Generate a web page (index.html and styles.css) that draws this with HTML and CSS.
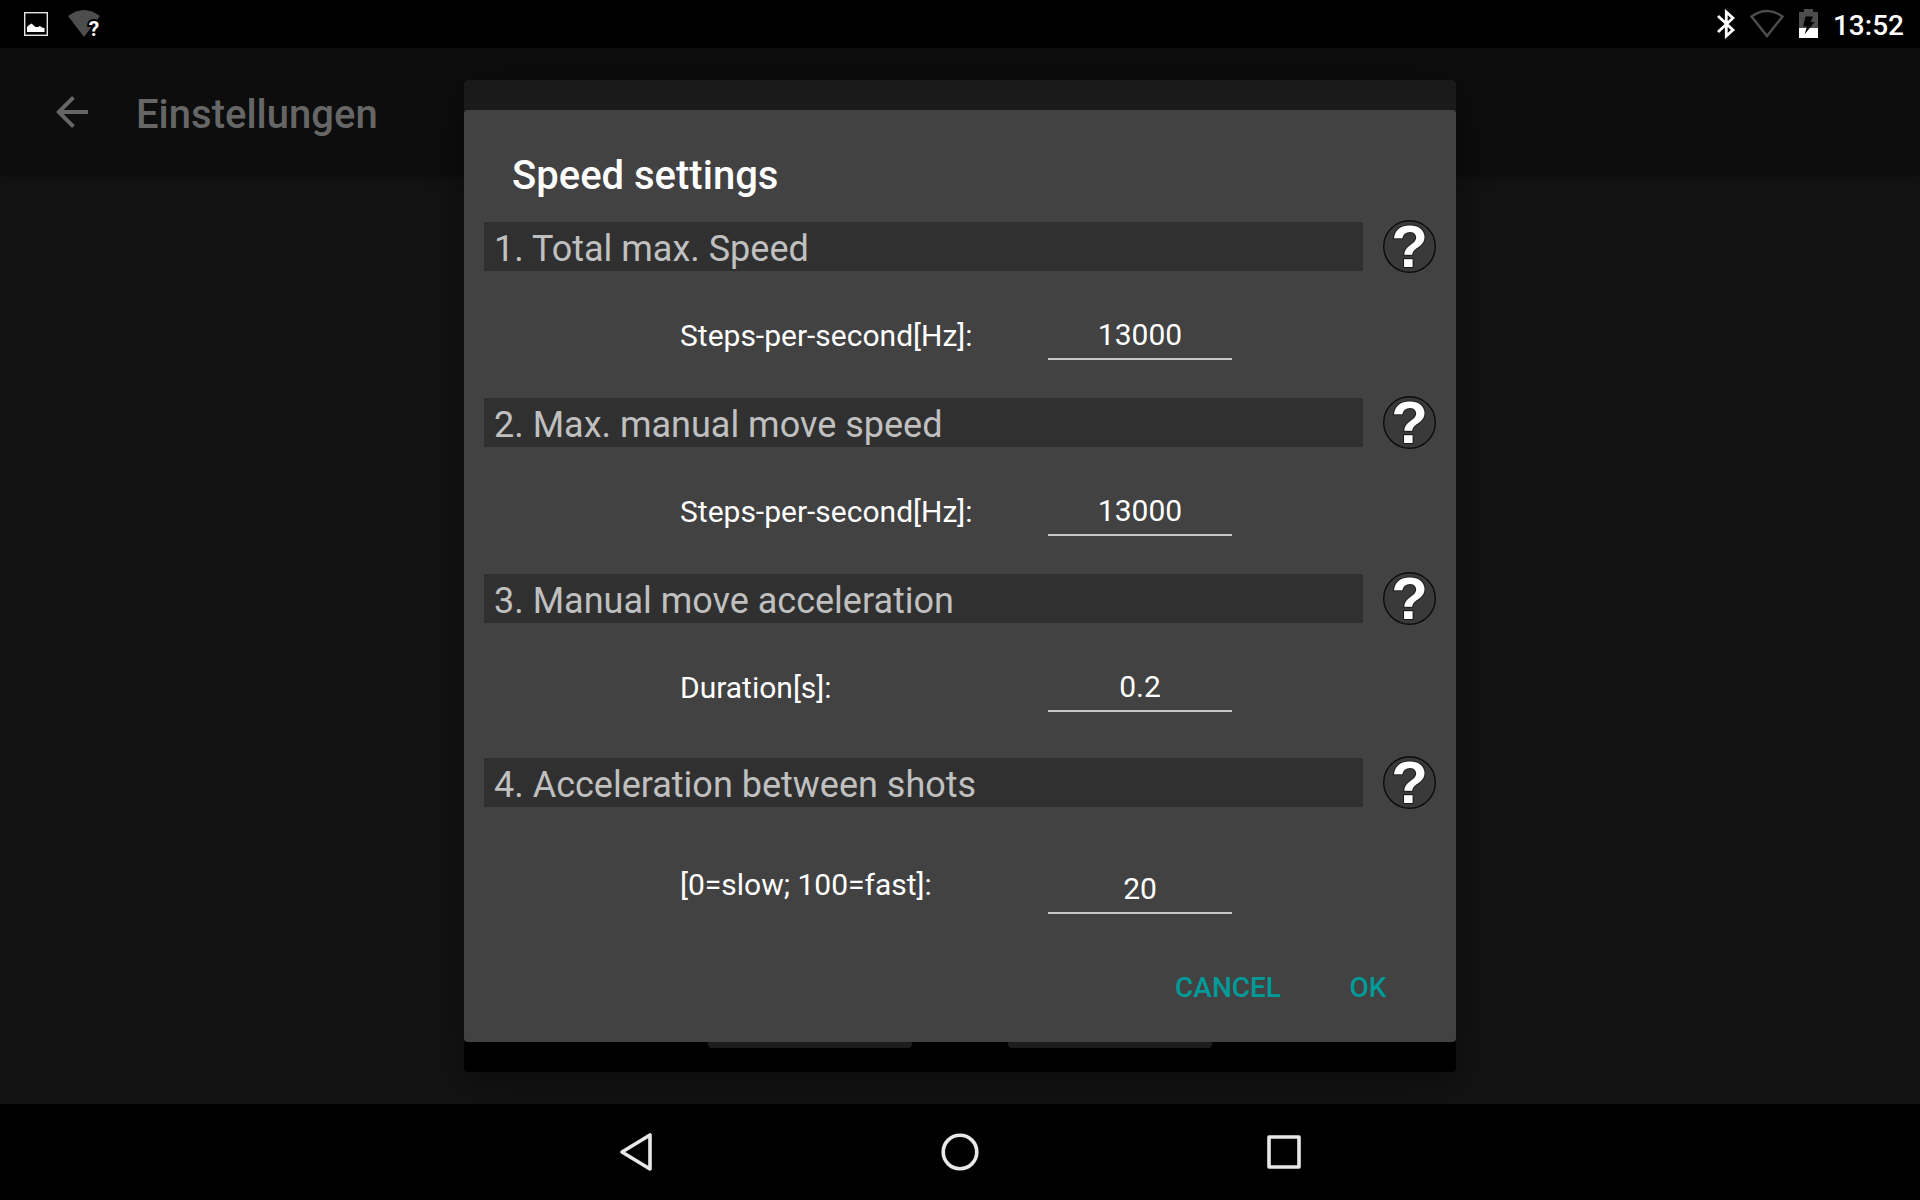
FILE: index.html
```
<!DOCTYPE html>
<html lang="de">
<head>
	<meta charset="utf-8">
	<meta name="viewport" content="width=device-width, initial-scale=1">
	<title>Einstellungen</title>
	<link rel="stylesheet" href="styles.css">
</head>
<body>
<div class="statusbar">
	<svg class="picture" width="24" height="24" viewBox="0 0 24 24">
		<rect x="0.7" y="0.7" width="22.6" height="22.6" fill="none" stroke="#e4e4e4" stroke-width="1.4"/>
		<path d="M3 20V15L5 13L7.500 11.500L11.500 15H14L16 14L18 15.500L20.500 16V20Z" fill="#fff"/>
	</svg>
	<svg class="wifi" width="36" height="32" viewBox="0 0 36 32">
		<path d="M0 8Q16 -4 32 8L16 29Z" fill="#4d4d4d"/>
		<text class="wifimark" x="26" y="28" text-anchor="middle">?</text>
	</svg>
	<div class="statusright">
		<svg width="18" height="30" viewBox="0 0 18 30">
			<path d="M1 7L16 21L9.300 27V3L16 9L1 23" fill="none" stroke="#fff" stroke-width="2.800"/>
		</svg>
		<svg width="34" height="30" viewBox="0 0 34 30">
			<path d="M1.500 7.500Q17 -3.500 32.500 7.500L17 27Z" fill="none" stroke="#4d4d4d" stroke-width="2.400"/>
		</svg>
		<svg width="19" height="30" viewBox="0 0 19 30">
			<path d="M0 3H5V0H14V3H19V20H0Z" fill="#4d4d4d"/>
			<path d="M0 19H19V29H0Z" fill="#fff"/>
			<path d="M6.500 7.500H14L11.500 13H15.500L5.500 25.500L8 17.500H4Z" fill="#000"/>
		</svg>
		<span class="clock">13:52</span>
	</div>
</div>

<div class="screen">
	<div class="appbar">
		<button class="back" aria-label="Zurück">
			<svg width="48" height="48" viewBox="0 0 24 24">
				<path d="M20 11H7.830l5.590-5.590L12 4l-8 8 8 8 1.410-1.410L7.830 13H20v-2z" fill="#666"/>
			</svg>
		</button>
		<h1>Einstellungen</h1>
	</div>

	<div class="overlay">
		<div class="underdialog">
			<div class="underhead"></div>
			<form class="dialog" role="dialog" aria-labelledby="title">
				<h2 id="title">Speed settings</h2>

				<div class="section">
					<h3>1. Total max. Speed</h3>
					<button type="button" class="help" aria-label="Help">
						<svg viewBox="0 0 53 53">
							<circle cx="26.5" cy="26.5" r="25.8"/>
							<text x="26.5" y="47" text-anchor="middle">?</text>
						</svg>
					</button>
				</div>
				<div class="field">
					<label for="total">Steps-per-second[Hz]:</label>
					<input id="total" type="text" value="13000">
				</div>

				<div class="section">
					<h3>2. Max. manual move speed</h3>
					<button type="button" class="help" aria-label="Help">
						<svg viewBox="0 0 53 53">
							<circle cx="26.5" cy="26.5" r="25.8"/>
							<text x="26.5" y="47" text-anchor="middle">?</text>
						</svg>
					</button>
				</div>
				<div class="field">
					<label for="manual">Steps-per-second[Hz]:</label>
					<input id="manual" type="text" value="13000">
				</div>

				<div class="section">
					<h3>3. Manual move acceleration</h3>
					<button type="button" class="help" aria-label="Help">
						<svg viewBox="0 0 53 53">
							<circle cx="26.5" cy="26.5" r="25.8"/>
							<text x="26.5" y="47" text-anchor="middle">?</text>
						</svg>
					</button>
				</div>
				<div class="field duration">
					<label for="duration">Duration[s]:</label>
					<input id="duration" type="text" value="0.2">
				</div>

				<div class="section">
					<h3>4. Acceleration between shots</h3>
					<button type="button" class="help" aria-label="Help">
						<svg viewBox="0 0 53 53">
							<circle cx="26.5" cy="26.5" r="25.8"/>
							<text x="26.5" y="47" text-anchor="middle">?</text>
						</svg>
					</button>
				</div>
				<div class="field shots">
					<label for="shots">[0=slow; 100=fast]:</label>
					<input id="shots" type="text" value="20">
				</div>

				<div class="actions">
					<button type="button">CANCEL</button>
					<button type="button">OK</button>
				</div>
			</form>
			<div class="underfoot">
				<div class="underbutton"></div>
				<div class="underbutton"></div>
			</div>
		</div>
	</div>
</div>

<div class="navbar">
	<button aria-label="Back">
		<svg width="40" height="40" viewBox="0 0 40 40">
			<path d="M34 3V37L6 20Z" fill="none" stroke="#e8e8e8" stroke-width="3.600" stroke-linejoin="round"/>
		</svg>
	</button>
	<button aria-label="Home">
		<svg width="40" height="40" viewBox="0 0 40 40">
			<circle cx="20" cy="20" r="16.800" fill="none" stroke="#e8e8e8" stroke-width="3.600"/>
		</svg>
	</button>
	<button aria-label="Recent apps">
		<svg width="40" height="40" viewBox="0 0 40 40">
			<rect x="5" y="5" width="30" height="30" fill="none" stroke="#e8e8e8" stroke-width="3.600" stroke-linejoin="round"/>
		</svg>
	</button>
</div>
</body>
</html>
```
FILE: styles.css
```
*{
	box-sizing: border-box;
	font-family: Roboto, sans-serif;
}
body{
	margin: 0;
	min-height: 100vh;
	display: flex;
	flex-direction: column;
	background: #131313;
	color: white;
}
h1, h2, h3{
	margin: 0;
}
button{
	padding: 0;
	border: none;
	background: none;
	color: inherit;
	cursor: pointer;
}
svg{
	display: block;
}

/* status bar */
.statusbar{
	display: flex;
	align-items: center;
	height: 48px;
	padding: 0 16px 0 24px;
	background: black;
}
.picture{
	margin-right: 20px;
}
.wifi{
	overflow: visible;
}
.wifimark{
	font-size: 21px;
	font-weight: 700;
	fill: white;
	stroke: black;
	stroke-width: 4px;
	paint-order: stroke;
}
.statusright{
	display: flex;
	align-items: center;
	gap: 15px;
	margin-left: auto;
}
.clock{
	font-size: 28px;
	font-weight: 500;
	line-height: 44px;
	padding-top: 4px;
}

/* activity behind the dialogs */
.screen{
	position: relative;
	flex: 1;
}
.appbar{
	display: flex;
	align-items: center;
	gap: 40px;
	height: 128px;
	padding-left: 48px;
	background: #0d0d0d;
	box-shadow: 0 3px 10px rgba(0, 0, 0, 0.2);
}
.appbar h1{
	font-size: 40px;
	font-weight: 500;
	line-height: 48px;
	padding-top: 6px;
	color: #666;
}
.overlay{
	position: absolute;
	inset: 0;
	display: flex;
	align-items: center;
	justify-content: center;
}
.underdialog{
	width: 90%;
	max-width: 992px;
	border-radius: 4px;
	background: black;
	box-shadow: 0 8px 40px rgba(0, 0, 0, 0.45);
}
.underhead{
	height: 34px;
	margin-bottom: -4px;
	border-radius: 4px 4px 0 0;
	background: #1a1a1a;
}
.underfoot{
	display: flex;
	justify-content: center;
	gap: 96px;
	height: 30px;
}
.underbutton{
	width: 204px;
	height: 6px;
	border-radius: 0 0 4px 4px;
	background: #1c1c1c;
}

/* dialog */
.dialog{
	padding: 42px 20px 20px;
	border-radius: 4px;
	background: #424242;
}
.dialog h2{
	margin-bottom: 20px;
	padding-left: 28px;
	font-size: 40px;
	font-weight: 500;
	line-height: 48px;
}
.section{
	display: flex;
	align-items: center;
	gap: 20px;
}
.section h3{
	flex: 1;
	padding: 6px 10px 0;
	background: #303030;
	color: #c0c0c0;
	font-size: 36px;
	font-weight: 400;
	line-height: 43px;
}
.help, .help svg{
	width: 53px;
	height: 53px;
}
.help svg{
	overflow: visible;
}
.help circle{
	fill: #3a3a3a;
	stroke: #0c0c0c;
	stroke-width: 1.4;
}
.help text{
	font-family: "Liberation Sans", sans-serif;
	font-size: 60px;
	font-weight: 700;
	fill: white;
	stroke: #1c1c1c;
	stroke-width: 2px;
	paint-order: stroke;
}
.field{
	display: grid;
	grid-template-columns: 368px 184px;
	align-items: start;
	padding: 42px 0 36px 196px;
	font-size: 30px;
}
.field label{
	line-height: 42px;
}
.field input{
	width: 100%;
	height: 45px;
	padding: 1px 0 5px;
	border: none;
	border-bottom: 2px solid #c8c8c8;
	background: none;
	color: white;
	font-size: 30px;
	line-height: 36px;
	text-align: center;
	outline: none;
}
.duration{
	padding-bottom: 44px;
}
.shots{
	padding-top: 55px;
}
.shots input{
	margin-top: 5px;
}
.actions{
	display: flex;
	justify-content: flex-end;
	gap: 12px;
	padding-right: 4px;
}
.actions button{
	min-width: 128px;
	height: 72px;
	padding-top: 2px;
	color: #009a98;
	font-size: 28px;
	font-weight: 500;
}

/* navigation bar */
.navbar{
	display: flex;
	justify-content: center;
	background: black;
}
.navbar button{
	display: flex;
	align-items: center;
	justify-content: center;
	width: 324px;
	height: 96px;
}
```
